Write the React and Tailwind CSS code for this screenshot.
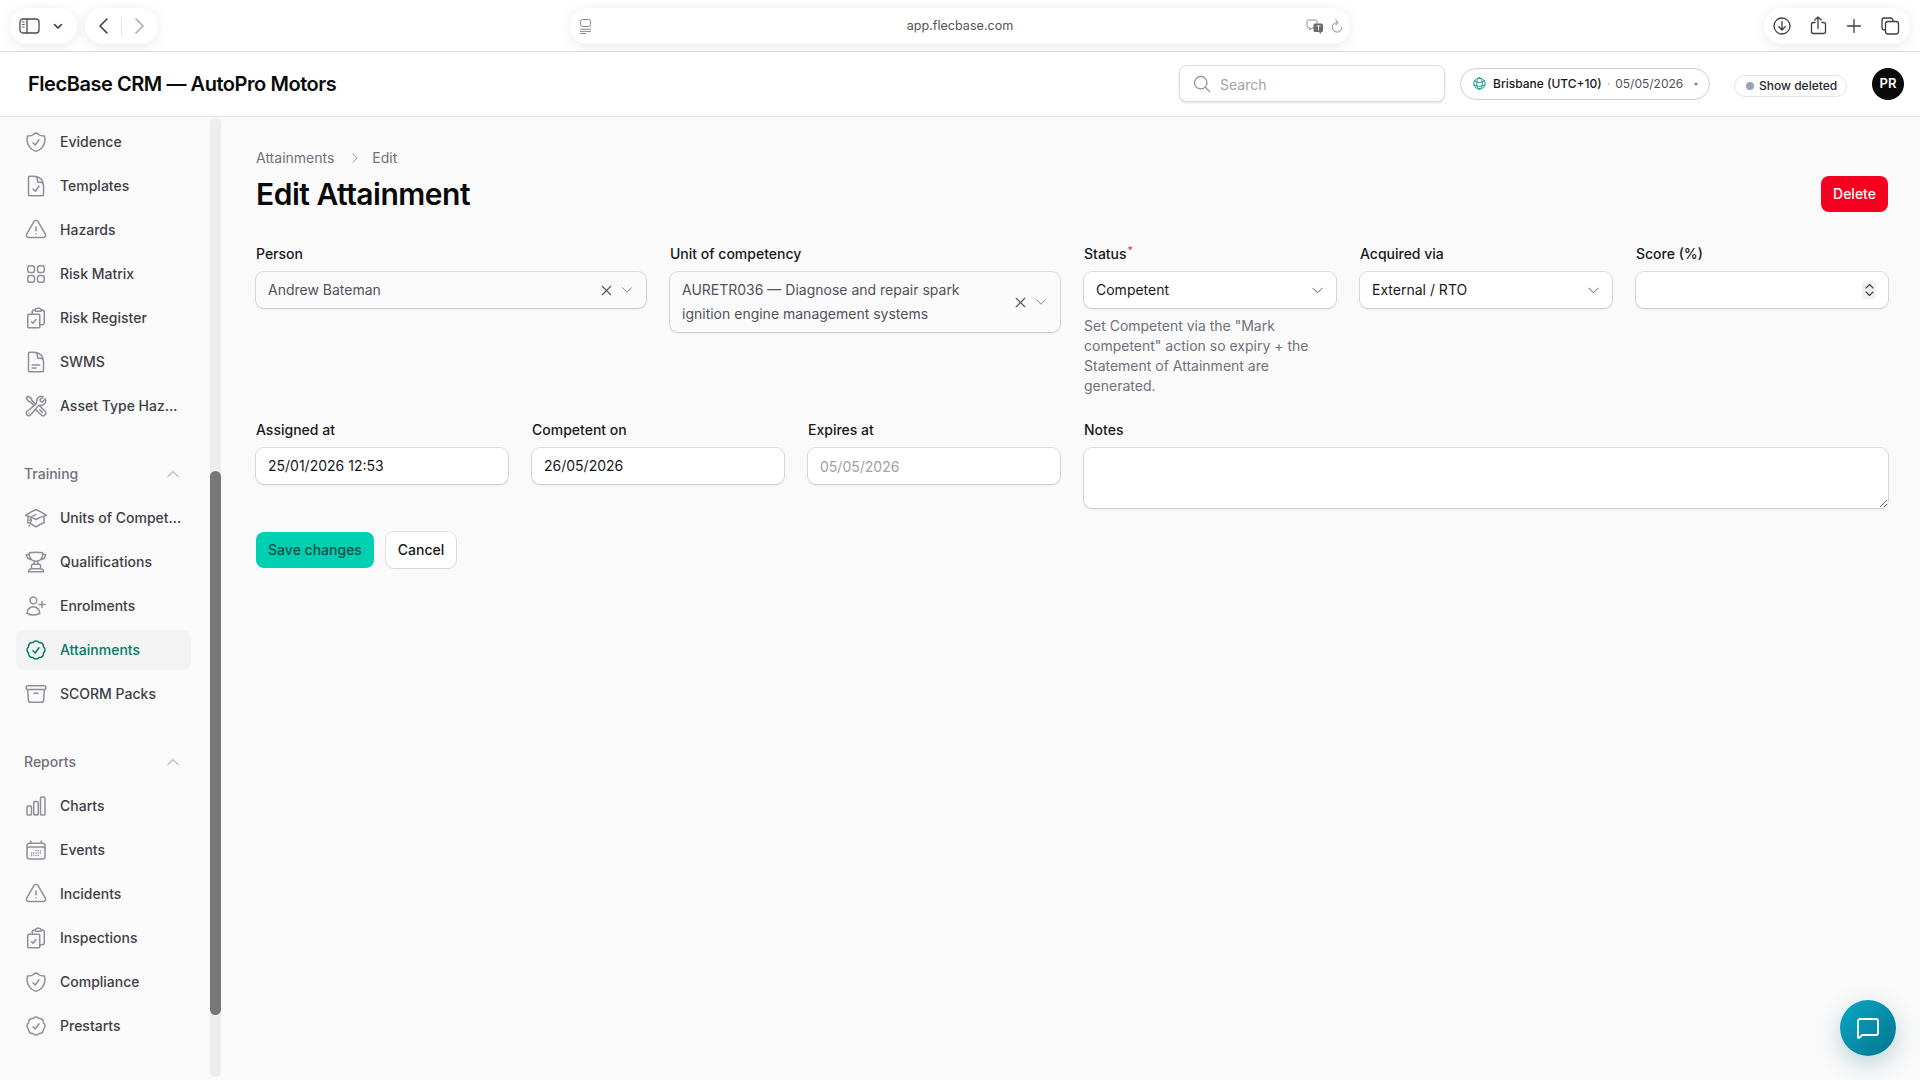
import React from "react";
import {
  HiOutlineShieldCheck,
  HiOutlineDocumentCheck,
  HiOutlineExclamationTriangle,
  HiOutlineSquares2X2,
  HiOutlineClipboardDocumentCheck,
  HiOutlineDocumentText,
  HiOutlineWrenchScrewdriver,
  HiOutlineAcademicCap,
  HiOutlineTrophy,
  HiOutlineUserPlus,
  HiOutlineCheckBadge,
  HiOutlineArchiveBox,
  HiOutlineChartBar,
  HiOutlineCalendarDays,
  HiOutlineChevronUp,
  HiOutlineChevronDown,
  HiOutlineChevronRight,
  HiOutlineXMark,
  HiOutlineMagnifyingGlass,
  HiOutlineGlobeAlt,
} from "react-icons/hi2";
import { MessageSquare } from "lucide-react";

function BrowserBar() {
  const pill = "flex h-9 items-center rounded-full bg-white shadow-[0_2px_14px_rgba(0,0,0,0.09)]";
  return (
    <div className="grid h-[52px] shrink-0 grid-cols-[1fr_780px_1fr] items-start border-b border-[#dcdcdc] bg-white pt-2 pl-[10px] pr-[10px]">
      <div className="flex gap-2">
        <div className={`${pill} w-[67px] pl-[9px]`}>
          <svg width="21" height="16" viewBox="0 0 21 16" fill="none" stroke="#4a4a4a" strokeWidth="1.3">
            <rect x="1" y="1" width="19" height="14" rx="3" />
            <path d="M8 1v14" />
            <path d="M3.2 4h2.4M3.2 6.5h2.4M3.2 9h2.4" strokeWidth="1" />
          </svg>
          <svg className="ml-[13px]" width="10" height="7" viewBox="0 0 10 7" fill="none" stroke="#3a3a3a" strokeWidth="1.6" strokeLinecap="round" strokeLinejoin="round">
            <path d="M1.5 1.5 5 5l3.5-3.5" />
          </svg>
        </div>
        <div className={`${pill} w-[73px] pl-[14px]`}>
          <svg width="9" height="16" viewBox="0 0 9 16" fill="none" stroke="#3a3a3a" strokeWidth="1.5" strokeLinecap="round" strokeLinejoin="round">
            <path d="M8 1 1 8l7 7" />
          </svg>
          <div className="ml-[13px] h-[19px] w-px bg-[#e4e4e4]" />
          <svg className="ml-[13px]" width="9" height="16" viewBox="0 0 9 16" fill="none" stroke="#a9a9a9" strokeWidth="1.5" strokeLinecap="round" strokeLinejoin="round">
            <path d="m1 1 7 7-7 7" />
          </svg>
        </div>
      </div>
      <div className={`${pill} pl-[9px] pr-[7px]`}>
        <svg width="13" height="15" viewBox="0 0 13 15" fill="none" stroke="#8a8a8a" strokeWidth="1">
          <rect x="1.5" y="0.5" width="10" height="7" rx="2" />
          <path d="M1 10.2h11M1 12.4h11M1 14.5h6" />
        </svg>
        <div className="flex-1 pl-[22px] pt-[1px] text-center text-[12.6px] text-[#555555]">app.flecbase.com</div>
        <svg width="18" height="15" viewBox="0 0 18 15">
          <path d="M2.5 1h7a1.5 1.5 0 0 1 1.5 1.5v5A1.5 1.5 0 0 1 9.500 9H6L4 11V9H2.500A1.500 1.500 0 0 1 1 7.500v-5A1.500 1.500 0 0 1 2.500 1Z" fill="none" stroke="#8a8a8a" strokeWidth="1" />
          <path d="M9 4.500h6.500A1.500 1.500 0 0 1 17 6v5.500a1.500 1.500 0 0 1-1.500 1.500H15v2l-2.200-2H9a1.500 1.500 0 0 1-1.500-1.500V6A1.500 1.500 0 0 1 9 4.500Z" fill="#6b6b6b" />
          <path d="M10.500 7h4M12.500 6.500v5" stroke="#ffffff" strokeWidth="0.8" />
        </svg>
        <svg className="ml-[7px]" width="12" height="15" viewBox="0 0 12 15" fill="none" stroke="#8a8a8a" strokeWidth="1" strokeLinecap="round">
          <path d="M6 3.500a4.800 4.800 0 1 0 4.800 5" />
          <path d="M4.800 1 7 3.500 4.800 6" />
        </svg>
      </div>
      <div className="flex justify-end">
        <div className={`${pill} w-[146px] gap-4 pl-2`}>
          <svg width="20" height="20" viewBox="0 0 20 20" fill="none" stroke="#3f3f3f" strokeWidth="1.3" strokeLinecap="round" strokeLinejoin="round">
            <circle cx="10" cy="10" r="8" />
            <path d="M10 5.500v8.500M6.800 10.800 10 14l3.200-3.200" />
          </svg>
          <svg width="20" height="20" viewBox="0 0 20 20" fill="none" stroke="#3f3f3f" strokeWidth="1.3" strokeLinecap="round" strokeLinejoin="round">
            <path d="M6.500 7.500H5a2 2 0 0 0-2.000 2v7a2 2 0 0 0 2 2h10a2 2 0 0 0 2-2v-7a2 2 0 0 0-2-2h-1.500" transform="translate(0.500 -1)" />
            <path d="M10 12V0.500M6.800 3.500 10 0.500l3.200 3" transform="translate(0 0.500)" />
          </svg>
          <svg width="20" height="20" viewBox="0 0 20 20" fill="none" stroke="#3f3f3f" strokeWidth="1.3" strokeLinecap="round">
            <path d="M10 3.500v13M3.500 10h13" />
          </svg>
          <svg width="20" height="20" viewBox="0 0 20 20" fill="none" stroke="#3f3f3f" strokeWidth="1.3">
            <path d="M5 14h-.500A2.500 2.500 0 0 1 2 11.500v-7A2.500 2.500 0 0 1 4.500 2h6A2.500 2.500 0 0 1 13 4.500V5" />
            <rect x="5.500" y="5.500" width="13" height="12.500" rx="2.500" />
          </svg>
        </div>
      </div>
    </div>
  );
}

function TopBar() {
  return (
    <header className="flex h-[65px] shrink-0 items-center border-b border-[#e5e5e5] bg-white pb-[1px] pl-[28px] pr-4">
      <h1 className="text-xl font-semibold tracking-[-0.45px] text-[#0a0a0a]">FlecBase CRM — AutoPro Motors</h1>
      <div className="ml-auto flex h-[37px] w-[266px] items-center gap-2 rounded-lg border border-[#dddddf] bg-white pl-[12px] shadow-sm">
        <HiOutlineMagnifyingGlass className="h-5 w-5 text-[#8e8e99]" />
        <span className="pt-[2px] text-sm text-[#a1a1aa]">Search</span>
      </div>
      <div className="ml-[15px] flex h-8 w-[250px] items-center rounded-full border border-[#cfcfcf] bg-white pl-[11px]">
        <HiOutlineGlobeAlt className="h-[15px] w-[15px] text-[#0d9488]" />
        <span className="ml-[6px] text-xs font-medium text-[#18181b]">Brisbane (UTC+10)</span>
        <span className="ml-[5px] text-xs text-[#a1a1aa]">·</span>
        <span className="ml-[5px] text-xs text-[#52525b]">05/05/2026</span>
        <svg className="ml-[11px]" width="4" height="4" viewBox="0 0 4 4">
          <path d="M0 1h4L2 4Z" fill="#71717a" />
        </svg>
      </div>
      <div className="ml-6 mt-1 flex h-[22px] w-[113px] items-center rounded-full border border-[#e4e4e7] bg-white pl-[11px]">
        <span className="h-2 w-2 rounded-full bg-[#94a3b8]" />
        <span className="ml-[5px] text-xs font-medium text-[#27272a]">Show deleted</span>
      </div>
      <div className="ml-[25px] flex h-8 w-8 items-center justify-center rounded-full bg-[#0a0a0a] text-[13px] font-semibold text-white">PR</div>
    </header>
  );
}

function NavItem({ icon: Icon, label, active }) {
  return (
    <div className={`flex h-10 items-center gap-3 rounded-lg px-2 ${active ? "bg-[#f3f3f4]" : ""}`}>
      <Icon className={`h-6 w-6 shrink-0 ${active ? "text-[#047a66]" : "text-[#8f8f9c]"}`} />
      <span className={`truncate text-sm font-medium ${active ? "text-[#047a66]" : "text-[#3f3f46]"}`}>{label}</span>
    </div>
  );
}

function NavGroup({ title, items }) {
  return (
    <div className="flex flex-col gap-1">
      {title && (
        <div className="flex h-10 items-center justify-between px-2">
          <span className="text-sm font-medium text-[#71717a]">{title}</span>
          <HiOutlineChevronUp className="mr-[2px] h-4 w-4 text-[#8f8f9c]" />
        </div>
      )}
      {items.map((it) => (
        <NavItem key={it.label} {...it} />
      ))}
    </div>
  );
}

function Sidebar() {
  return (
    <aside className="flex w-56 shrink-0 overflow-hidden">
      <nav className="flex w-[210px] shrink-0 flex-col gap-7 pl-4 pr-[19px] pt-[5px]">
        <NavGroup
          items={[
            { icon: HiOutlineShieldCheck, label: "Evidence" },
            { icon: HiOutlineDocumentCheck, label: "Templates" },
            { icon: HiOutlineExclamationTriangle, label: "Hazards" },
            { icon: HiOutlineSquares2X2, label: "Risk Matrix" },
            { icon: HiOutlineClipboardDocumentCheck, label: "Risk Register" },
            { icon: HiOutlineDocumentText, label: "SWMS" },
            { icon: HiOutlineWrenchScrewdriver, label: "Asset Type Hazards" },
          ]}
        />
        <NavGroup
          title="Training"
          items={[
            { icon: HiOutlineAcademicCap, label: "Units of Competency" },
            { icon: HiOutlineTrophy, label: "Qualifications" },
            { icon: HiOutlineUserPlus, label: "Enrolments" },
            { icon: HiOutlineCheckBadge, label: "Attainments", active: true },
            { icon: HiOutlineArchiveBox, label: "SCORM Packs" },
          ]}
        />
        <NavGroup
          title="Reports"
          items={[
            { icon: HiOutlineChartBar, label: "Charts" },
            { icon: HiOutlineCalendarDays, label: "Events" },
            { icon: HiOutlineExclamationTriangle, label: "Incidents" },
            { icon: HiOutlineClipboardDocumentCheck, label: "Inspections" },
            { icon: HiOutlineShieldCheck, label: "Compliance" },
            { icon: HiOutlineCheckBadge, label: "Prestarts" },
          ]}
        />
      </nav>
      <div className="mb-[3px] mt-[1px] w-[11px] shrink-0 rounded-full bg-[#ededed] pt-[353px]">
        <div className="h-[544px] rounded-full bg-[#777777]" />
      </div>
    </aside>
  );
}

function Field({ label, required, span, children }) {
  return (
    <div className={`flex flex-col gap-2 ${span}`}>
      <label className="text-sm leading-5 font-medium text-[#18181b]">
        {label}
        {required && <sup className="ml-[1px] font-medium text-[#ef4444]">*</sup>}
      </label>
      {children}
    </div>
  );
}

const box = "flex min-h-9 items-center rounded-lg px-3 py-[6px] text-sm leading-6 shadow-sm ring-1 ring-black/10";

function SearchSelect({ children }) {
  return (
    <div className={`${box} bg-[#fafafa] text-[#52525b]`}>
      <span className="max-w-[300px] flex-1">{children}</span>
      <div className="ml-auto flex items-center gap-[5px] text-[#52525b]">
        <HiOutlineXMark className="h-[17px] w-[17px]" />
        <HiOutlineChevronDown className="h-[14px] w-[14px] text-[#71717a]" />
      </div>
    </div>
  );
}

function PlainSelect({ children }) {
  return (
    <div className={`${box} justify-between bg-white text-[#18181b]`}>
      <span>{children}</span>
      <HiOutlineChevronDown className="-mr-[1px] h-[15px] w-[15px] text-[#52525b]" />
    </div>
  );
}

function App() {
  return (
    <div className="flex h-screen w-screen flex-col overflow-hidden bg-[#fafafa] font-['Inter',sans-serif] antialiased">
      <BrowserBar />
      <TopBar />
      <div className="flex min-h-0 flex-1">
        <Sidebar />
        <main className="min-w-0 flex-1 px-8 pt-[31px]">
          <div className="flex h-5 items-center text-sm text-[#71717a]">
            <span>Attainments</span>
            <HiOutlineChevronRight className="ml-[14px] mr-[10px] h-[14px] w-[14px] text-[#8f8f9c]" />
            <span>Edit</span>
          </div>
          <div className="mt-2 flex h-9 items-center justify-between">
            <h2 className="text-3xl font-semibold tracking-[-0.5px] text-[#0a0a0a]">Edit Attainment</h2>
            <button className="flex h-9 w-[67px] items-center justify-center rounded-lg bg-[#f5001e] text-sm font-medium text-white">Delete</button>
          </div>

          <div className="mt-8 grid grid-cols-12 items-start gap-6">
            <Field label="Person" span="col-span-3">
              <SearchSelect>Andrew Bateman</SearchSelect>
            </Field>
            <Field label="Unit of competency" span="col-span-3">
              <SearchSelect>AURETR036 — Diagnose and repair spark ignition engine management systems</SearchSelect>
            </Field>
            <Field label="Status" required span="col-span-2">
              <PlainSelect>Competent</PlainSelect>
              <p className="text-sm leading-5 text-[#71717a]">Set Competent via the "Mark competent" action so expiry + the Statement of Attainment are generated.</p>
            </Field>
            <Field label="Acquired via" span="col-span-2">
              <PlainSelect>External / RTO</PlainSelect>
            </Field>
            <Field label="Score (%)" span="col-span-2">
              <div className={`${box} justify-end bg-white pr-[12px]`}>
                <div className="flex h-[18px] w-[14px] flex-col items-center justify-center gap-[2px] rounded-[4px] bg-[#f1f1f2]">
                  <svg width="9" height="6" viewBox="0 0 9 6" fill="none" stroke="#3f3f46" strokeWidth="1.100" strokeLinecap="round" strokeLinejoin="round"><path d="M1 5 4.500 1.500 8 5" /></svg>
                  <svg width="9" height="6" viewBox="0 0 9 6" fill="none" stroke="#3f3f46" strokeWidth="1.100" strokeLinecap="round" strokeLinejoin="round"><path d="m1 1 3.500 3.500L8 1" /></svg>
                </div>
              </div>
            </Field>

            <Field label="Assigned at" span="col-span-2">
              <div className={`${box} bg-white text-[#18181b]`}>25/01/2026 12:53</div>
            </Field>
            <Field label="Competent on" span="col-span-2">
              <div className={`${box} bg-white text-[#18181b]`}>26/05/2026</div>
            </Field>
            <Field label="Expires at" span="col-span-2">
              <div className={`${box} bg-white text-[#a1a1aa]`}><span className="pt-[1px] leading-[23px]">05/05/2026</span></div>
            </Field>
            <Field label="Notes" span="col-span-6">
              <textarea readOnly className="block h-[60px] w-full resize-y rounded-lg bg-white shadow-sm ring-1 ring-black/10 outline-none" />
            </Field>
          </div>

          <div className="mt-6 flex gap-3">
            <button className="flex h-9 w-[118px] items-center justify-center rounded-lg bg-[#00d0b2] text-sm font-medium text-[#0b4f46]">Save changes</button>
            <button className="flex h-9 w-[70px] items-center justify-center rounded-lg bg-white text-sm font-medium text-[#18181b] shadow-xs ring-1 ring-black/10">Cancel</button>
          </div>
        </main>
      </div>
      <button className="fixed bottom-6 right-6 flex h-14 w-14 items-center justify-center rounded-full bg-linear-to-br from-[#0aa8c6] to-[#04758f] text-white shadow-[0_8px_24px_rgba(4,90,120,0.25)]">
        <MessageSquare className="h-6 w-6" strokeWidth={1.8} />
      </button>
    </div>
  );
}

export default App;
